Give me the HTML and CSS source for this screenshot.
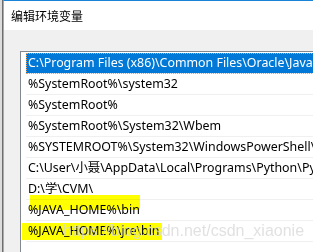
FILE: index.html
```html
<!DOCTYPE html>
<html lang="zh-CN">
<head>
    <meta charset="UTF-8">
    <title>编辑环境变量</title>
    <link rel="stylesheet" href="styles.css">
</head>
<body>
<div class="desk">
    <div class="behind"></div>
    <div class="window">
        <div class="titlebar">编辑环境变量</div>
        <div class="client">
            <ul class="list">
                <li class="current"><span>C:\Program Files (x86)\Common Files\Oracle\Java\javapath</span></li>
                <li><span>%SystemRoot%\system32</span></li>
                <li><span>%SystemRoot%</span></li>
                <li><span>%SystemRoot%\System32\Wbem</span></li>
                <li><span>%SYSTEMROOT%\System32\WindowsPowerShell\v1.0\</span></li>
                <li><span>C:\User\小聂\AppData\Local\Programs\Python\Python37\</span></li>
                <li><span>D:\学\CVM\</span></li>
                <li><span>%JAVA_HOME%\bin</span></li>
                <li><span>%JAVA_HOME%\jre\bin</span></li>
                <li><span></span></li>
            </ul>
        </div>
    </div>
</div>
<!-- 荧光笔标记和水印，盖在列表上面 -->
<div class="mark mark1"></div>
<div class="mark mark2"></div>
<div class="watermark">https://blog.csdn.net/csdn_xiaonie</div>
</body>
</html>
```

FILE: styles.css
```css
* {
    padding: 0;
    margin: 0;
    list-style: none;
    border: 0;
}

body {
    width: 313px;
    height: 252px;
    overflow: hidden;
    position: relative;
    background: #fff;
    font-family: "Noto Sans", "Noto Sans CJK SC", sans-serif;
    font-size: 12.4px;
    color: #000;
}

.desk {
    display: flex;
    height: 252px;
}

.behind {
    width: 2px;
    background: #dcdcdc;
    border-right: 1px solid #6d6d6d;
}

.window {
    flex: 1;
    display: flex;
    flex-direction: column;
    border-left: 1px solid #aaa;
    border-top: 1px solid #1883d7;
    overflow: hidden;
}

.titlebar {
    height: 30px;
    background: #fff;
    padding-left: 7px;
    line-height: 29px;
    font-family: "Noto Sans CJK SC", sans-serif;
    font-size: 12px;
}

.client {
    flex: 1;
    background: #f0f0f0;
    padding: 21px 0 0 16px;
}

.list {
    width: 400px;
    height: 300px;
    background: #fff;
    border: 1px solid #828790;
    padding: 1px 0 0 5px;
}

.list li {
    height: 20px;
    line-height: 20px;
    border-bottom: 1px solid #f0f0f0;
    white-space: nowrap;
    padding-left: 2px;
}

.list li.current {
    background: #0078d7;
    color: #fff;
    outline: 1px dotted #f0a060;
    outline-offset: -1px;
}

.mark {
    position: absolute;
    background: #ffff00;
    mix-blend-mode: multiply;
}

.mark1 {
    left: 30px;
    top: 195px;
    width: 110px;
    height: 15px;
}

.mark2 {
    left: 22px;
    top: 223px;
    width: 140px;
    height: 17px;
}

.watermark {
    position: absolute;
    left: 63px;
    top: 222px;
    font-family: "Liberation Sans", sans-serif;
    font-size: 16px;
    color: rgba(215, 215, 215, 0.75);
    white-space: nowrap;
}
```
